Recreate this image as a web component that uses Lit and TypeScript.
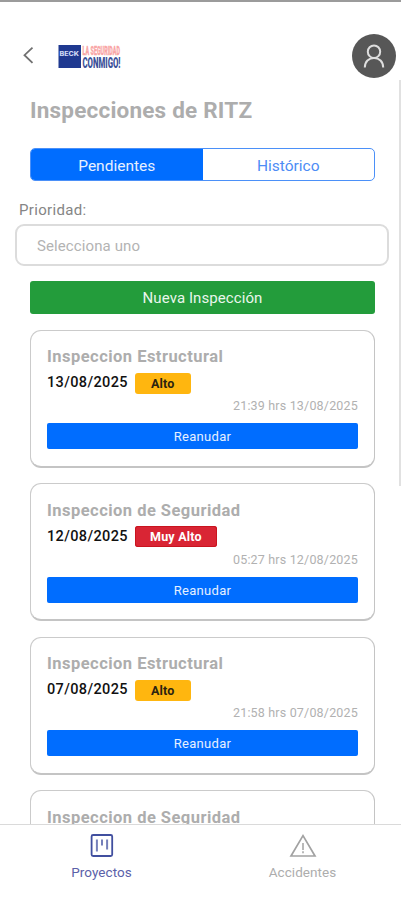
import { LitElement, html, css, svg, nothing } from "lit";
import { customElement, property } from "lit/decorators.js";
import { classMap } from "lit/directives/class-map.js";

interface Inspection {
  title: string;
  date?: string;
  priority?: string;
  stamp?: string;
}

const INSPECTIONS: Inspection[] = [
  { title: "Inspeccion Estructural", date: "13/08/2025", priority: "Alto", stamp: "21:39 hrs 13/08/2025" },
  { title: "Inspeccion de Seguridad", date: "12/08/2025", priority: "Muy Alto", stamp: "05:27 hrs 12/08/2025" },
  { title: "Inspeccion Estructural", date: "07/08/2025", priority: "Alto", stamp: "21:58 hrs 07/08/2025" },
  { title: "Inspeccion de Seguridad" },
];

@customElement("inspection-card")
export class InspectionCard extends LitElement {
  @property({ attribute: false }) item!: Inspection;

  static styles = css`
    :host {
      display: block;
      box-sizing: border-box;
      height: 138px;
      padding: 16.5px 16px 0;
      border: 1.5px solid #cbcbcb;
      border-bottom: 2px solid #c4c4c4;
      border-right-color: #c4c4c4;
      border-radius: 11px;
      background: #fff;
      flex: none;
      white-space: nowrap;
    }
    .title {
      font-size: 16.5px;
      line-height: 20px;
      font-weight: 700;
      letter-spacing: 0.47px;
      color: #adadad;
    }
    .row {
      display: flex;
      align-items: center;
      height: 22px;
      margin-top: 5px;
      gap: 8px;
    }
    .date {
      font-size: 14.5px;
      font-weight: 500;
      letter-spacing: 0.36px;
      color: #111;
      line-height: 22px;
      width: 80px;
    }
    .badge {
      height: 21px;
      border-radius: 3px;
      padding: 0 16px;
      font-size: 12.5px;
      line-height: 22px;
      font-weight: 700;
      letter-spacing: 0.2px;
      background: #ffb60f;
      color: #2c2410;
    }
    .badge.high {
      padding: 0 15px;
      background: #d92534;
      box-shadow: inset 0 0 0 1px #c9141f;
      color: #fff;
    }
    .stamp {
      font-size: 12.5px;
      line-height: 16px;
      margin-top: 4px;
      text-align: right;
      letter-spacing: 0.18px;
      color: #b1b1b1;
    }
    .resume {
      display: block;
      width: 100%;
      height: 26px;
      margin-top: 9px;
      padding: 1px 0 0;
      border: 0;
      border-radius: 2px;
      background: #006dff;
      color: #e6f0ff;
      font: 400 13px/25px Roboto, sans-serif;
      letter-spacing: 0.3px;
    }
  `;

  render() {
    const { title, date, priority, stamp } = this.item;
    return html`
      <div class="title">${title}</div>
      ${date
        ? html`
            <div class="row">
              <span class="date">${date}</span>
              <span class=${classMap({ badge: true, high: priority === "Muy Alto" })}>${priority}</span>
            </div>
            <div class="stamp">${stamp}</div>
            <button class="resume">Reanudar</button>
          `
        : nothing}
    `;
  }
}

@customElement("app-root")
export class AppRoot extends LitElement {
  static styles = css`
    :host {
      display: flex;
      flex-direction: column;
      position: relative;
      box-sizing: border-box;
      width: 401px;
      height: 900px;
      overflow: hidden;
      border-top: 2px solid #9b9b9b;
      background: #fff;
      font-family: Roboto, sans-serif;
      white-space: nowrap;
    }
    svg {
      display: block;
      flex: none;
      overflow: visible;
    }
    header {
      display: flex;
      align-items: center;
      height: 44px;
      margin-top: 32px;
      padding: 0 5px 0 23px;
      flex: none;
    }
    .back {
      margin-right: 24px;
    }
    .avatar {
      margin-left: auto;
    }
    h1 {
      margin: 18px 0 0 30px;
      font-size: 22.5px;
      line-height: 28px;
      font-weight: 700;
      letter-spacing: 0.2px;
      color: #adadad;
      flex: none;
    }
    .tabs {
      display: flex;
      box-sizing: border-box;
      height: 33px;
      margin: 24px 26px 0 30px;
      border: 1px solid #4b90f8;
      border-radius: 5px;
      overflow: hidden;
      flex: none;
      font-size: 15.5px;
      line-height: 34px;
      text-align: center;
    }
    .tab {
      flex: 1;
      color: #4d8cf5;
    }
    .tab.active {
      background: #006dff;
      color: #e6f0ff;
    }
    .label {
      margin: 19px 0 0 19px;
      font-size: 15px;
      line-height: 20px;
      letter-spacing: 0.33px;
      color: #858585;
      flex: none;
    }
    .select {
      box-sizing: border-box;
      height: 42px;
      margin: 4px 12px 0 15px;
      padding-left: 20px;
      border: 2px solid #dcdcdc;
      border-radius: 9px;
      font-size: 15px;
      line-height: 40px;
      letter-spacing: 0.1px;
      color: #b3b3b3;
      flex: none;
    }
    .create {
      height: 33px;
      margin: 15px 26px 0 30px;
      padding: 2px 0 0;
      border: 0;
      border-radius: 3px;
      background: #239c3b;
      color: #e9f6ec;
      font: 400 15px/31px Roboto, sans-serif;
      letter-spacing: 0.08px;
      flex: none;
    }
    .list {
      display: flex;
      flex-direction: column;
      gap: 15.5px;
      margin: 15.5px 26px 0 30px;
      flex: 1;
      min-height: 0;
      overflow: hidden;
    }
    nav {
      display: flex;
      box-sizing: border-box;
      height: 76px;
      padding-left: 3px;
      border-top: 1.5px solid #dadada;
      flex: none;
    }
    .item {
      flex: 1;
      display: flex;
      flex-direction: column;
      align-items: center;
      padding-top: 8px;
      gap: 4px;
      font-size: 13.5px;
      line-height: 20px;
      letter-spacing: 0.05px;
      color: #adadad;
    }
    .item + .item {
      padding-left: 4px;
    }
    .item.current {
      color: #5b61a9;
    }
    .scrollbar {
      position: absolute;
      top: 78px;
      right: 0;
      width: 2px;
      height: 406px;
      background: #e1e1e1;
    }
  `;

  private logo() {
    return svg`
      <svg class="logo" width="63" height="25" viewBox="0 0 63 25">
        <rect x="0.5" y="1" width="22.5" height="23" fill="#1f3990" />
        <text x="1.5" y="12" font-family="Inter, sans-serif" font-weight="800" font-size="6" fill="#cfd8f4" textLength="19.5" lengthAdjust="spacingAndGlyphs">BECK</text>
        <text x="24.5" y="10.5" font-family="Roboto, sans-serif" font-weight="900" font-size="12.5" fill="#f9a5a5" stroke="#f9a5a5" stroke-width="0.3" textLength="37.5" lengthAdjust="spacingAndGlyphs">LA SEGURIDAD</text>
        <text x="24.5" y="23.5" font-family="Roboto, sans-serif" font-weight="900" font-size="15" fill="#3c5199" textLength="38" lengthAdjust="spacingAndGlyphs">CONMIGO!</text>
      </svg>`;
  }

  render() {
    return html`
      <header>
        <svg class="back" width="11" height="18" viewBox="0 0 11 18" fill="none" stroke="#707070" stroke-width="1.8">
          <path d="M9.5 0.6 1.5 8.2 9.5 15.8" />
        </svg>
        ${this.logo()}
        <svg class="avatar" width="44" height="44" viewBox="0 0 44 44" fill="none" stroke="#dedede" stroke-width="2">
          <circle cx="22" cy="22" r="22" fill="#575757" stroke="none" />
          <circle cx="22" cy="17.7" r="6.2" />
          <path d="M12.8 33.5c0-5.8 4-9.6 9.2-9.6s9.2 3.8 9.2 9.6" />
        </svg>
      </header>
      <h1>Inspecciones de RITZ</h1>
      <div class="tabs">
        <div class="tab active">Pendientes</div>
        <div class="tab">Histórico</div>
      </div>
      <div class="label">Prioridad:</div>
      <div class="select">Selecciona uno</div>
      <button class="create">Nueva Inspección</button>
      <div class="list">
        ${INSPECTIONS.map((item) => html`<inspection-card .item=${item}></inspection-card>`)}
      </div>
      <nav>
        <div class="item current">
          <svg width="24" height="25" viewBox="0 0 24 25" fill="none" stroke="#414f9f" stroke-width="1.8">
            <rect x="1.6" y="2" width="20.6" height="21" rx="1.5" />
            <path d="M6.9 6.5v12M12 6.5v6M17.1 6.5v10" stroke="#7580ba" stroke-width="2" />
          </svg>
          Proyectos
        </div>
        <div class="item">
          <svg width="28" height="25" viewBox="0 0 28 25" fill="none" stroke="#a2a2a2" stroke-width="1.7">
            <path d="M14 2.6 26 23H2Z" />
            <path d="M14 10v7M14 18.3v1.9" stroke-width="1.5" />
          </svg>
          Accidentes
        </div>
      </nav>
      <div class="scrollbar"></div>
    `;
  }
}
